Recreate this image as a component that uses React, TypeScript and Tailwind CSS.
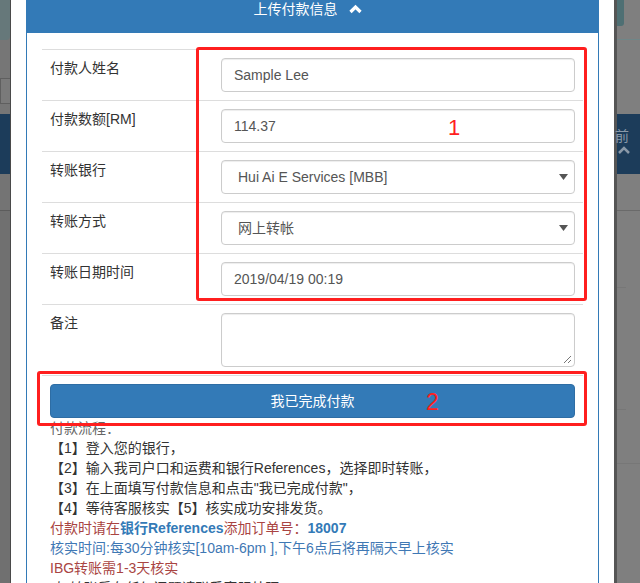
import React from "react";

const FONT = {
  fontFamily: '"Liberation Sans", Arial, "Noto Sans CJK SC", sans-serif',
};

function Field({ label, children }: { label: string; children: React.ReactNode }) {
  return (
    <div className="flex border-t border-[#ddd]">
      <div className="w-[171px] shrink-0 p-2 leading-[20px] text-[#333]">{label}</div>
      <div className="flex-1 p-2">{children}</div>
    </div>
  );
}

function TextInput({ value }: { value: string }) {
  return (
    <div className="h-[34px] flex items-center px-3 border border-[#ccc] rounded-[4px] text-[#555] shadow-[inset_0_1px_1px_rgba(0,0,0,0.075)]">
      {value}
    </div>
  );
}

function SelectInput({ value }: { value: string }) {
  return (
    <div className="h-[34px] flex items-center justify-between pl-4 pr-[6px] border border-[#ccc] rounded-[4px] text-[#555] shadow-[inset_0_1px_1px_rgba(0,0,0,0.075)]">
      <span>{value}</span>
      <svg width="9" height="6" viewBox="0 0 9 6">
        <path d="M0 0 L9 0 L4.5 6 Z" fill="#555" />
      </svg>
    </div>
  );
}

function LeftStrip() {
  return (
    <div className="w-[11px] shrink-0 h-full flex flex-col bg-[#767676] border-r border-[#4a4a4a]">
      <div className="h-[40px] bg-[#66787a] rounded-br-[4px]" />
      <div className="h-[38px]" />
      <div className="h-[26px] border-y border-l border-[#5f5f5f] bg-[#7a7a7a]" />
      <div className="h-[10px]" />
      <div className="h-[60px] bg-[#1c3c5a]" />
      <div className="h-[37px] bg-[#747474] border-b border-[#5c5c5c]" />
      <div className="flex-1 bg-[#707070]" />
    </div>
  );
}

function RightStrip() {
  return (
    <div className="flex-1 h-full flex flex-col bg-[#7f7f7f] border-l-[3px] border-[#555]">
      <div className="h-[26px] w-[7px] bg-[#4e6f73] rounded-br-[3px]" />
      <div className="h-[14px] border-b border-[#6f8688]" />
      <div className="h-[74px]" />
      <div className="h-[60px] bg-[#1c3c5a] flex flex-col pt-[14px] text-[#8a99a8] text-[14px] leading-[16px]">
        <span className="-ml-[2px]">前</span>
        <svg width="12" height="8" viewBox="0 0 12 8" className="ml-[1px] mt-[2px]">
          <polyline points="1,7 6,2 11,7" fill="none" stroke="#8a99a8" strokeWidth="2.5" />
        </svg>
      </div>
      <div className="h-[37px] border-b border-[#6a6a6a]" />
      <div className="h-[77px] w-[9px] border-b border-[#777]" />
      <div className="h-[122px] w-[9px] border-b border-[#777]" />
      <div className="h-[54px] border-b border-[#777]" />
      <div className="flex-1" />
    </div>
  );
}

export default function App() {
  return (
    <div className="w-[640px] h-[583px] overflow-hidden flex bg-[#7f7f7f] text-[14px]" style={FONT}>
      <LeftStrip />

      {/* Modal */}
      <div className="relative w-[603px] shrink-0 h-full bg-white px-[15px]">
        <div className="h-full border-x border-[#337ab7]">
          {/* Header */}
          <div className="h-[33px] bg-[#337ab7] flex justify-center gap-[11px] pr-[10px] text-white leading-[18px]">
            <span>上传付款信息</span>
            <svg width="13" height="18" viewBox="0 0 13 18">
              <polyline points="1.5,12 6.5,7 11.5,12" fill="none" stroke="#fff" strokeWidth="3.2" />
            </svg>
          </div>

          <div className="px-[15px] pt-[16px]">
            <Field label="付款人姓名">
              <TextInput value="Sample Lee" />
            </Field>
            <Field label="付款数额[RM]">
              <TextInput value="114.37" />
            </Field>
            <Field label="转账银行">
              <SelectInput value="Hui Ai E Services [MBB]" />
            </Field>
            <Field label="转账方式">
              <SelectInput value="网上转帐" />
            </Field>
            <Field label="转账日期时间">
              <TextInput value="2019/04/19 00:19" />
            </Field>
            <Field label="备注">
              <div className="relative h-[54px] border border-[#ccc] rounded-[4px] shadow-[inset_0_1px_1px_rgba(0,0,0,0.075)]">
                <svg width="9" height="9" viewBox="0 0 9 9" className="absolute right-[2px] bottom-[2px]">
                  <line x1="1" y1="8" x2="8" y2="1" stroke="#777" strokeWidth="1" />
                  <line x1="5" y1="8" x2="8" y2="5" stroke="#777" strokeWidth="1" />
                </svg>
              </div>
            </Field>
            <div className="border-t border-[#ddd] px-2 pt-2">
              <div className="h-[34px] bg-[#337ab7] border border-[#2e6da4] rounded-[4px] flex items-center justify-center text-white">
                我已完成付款
              </div>
            </div>

            {/* Payment steps */}
            <div className="pl-2 leading-[20px] text-[#333]">
              <div className="text-[#666]">付款流程：</div>
              <div>【1】登入您的银行，</div>
              <div>【2】输入我司户口和运费和银行References，选择即时转账，</div>
              <div>【3】在上面填写付款信息和点击"我已完成付款"，</div>
              <div>【4】等待客服核实【5】核实成功安排发货。</div>
              <div className="text-[#a94442]">
                付款时请在<b className="text-[#337ab7]">银行References</b>添加订单号：
                <b className="text-[#337ab7]">18007</b>
              </div>
              <div className="text-[#3f78b4]">核实时间:每30分钟核实[10am-6pm ],下午6点后将再隔天早上核实</div>
              <div className="text-[#a94442]">IBG转账需1-3天核实</div>
              <div className="text-[#333]">*如转账后有任何问题请联系客服处理</div>
            </div>
          </div>
        </div>

        {/* Red annotation boxes */}
        <div className="absolute left-[185px] top-[47px] w-[391px] h-[254px] border-[3px] border-[#ff1f1f] rounded-[3px]" />
        <div className="absolute left-[437px] top-[116px] text-[#ff1f1f] text-[22px] leading-[24px]">1</div>
        <div className="absolute left-[26px] top-[371px] w-[550px] h-[55px] border-[3px] border-[#ff1f1f] rounded-[3px]" />
        <div className="absolute left-[415px] top-[390px] text-[#ff1f1f] text-[23px] leading-[24px]">2</div>
      </div>

      <RightStrip />
    </div>
  );
}
